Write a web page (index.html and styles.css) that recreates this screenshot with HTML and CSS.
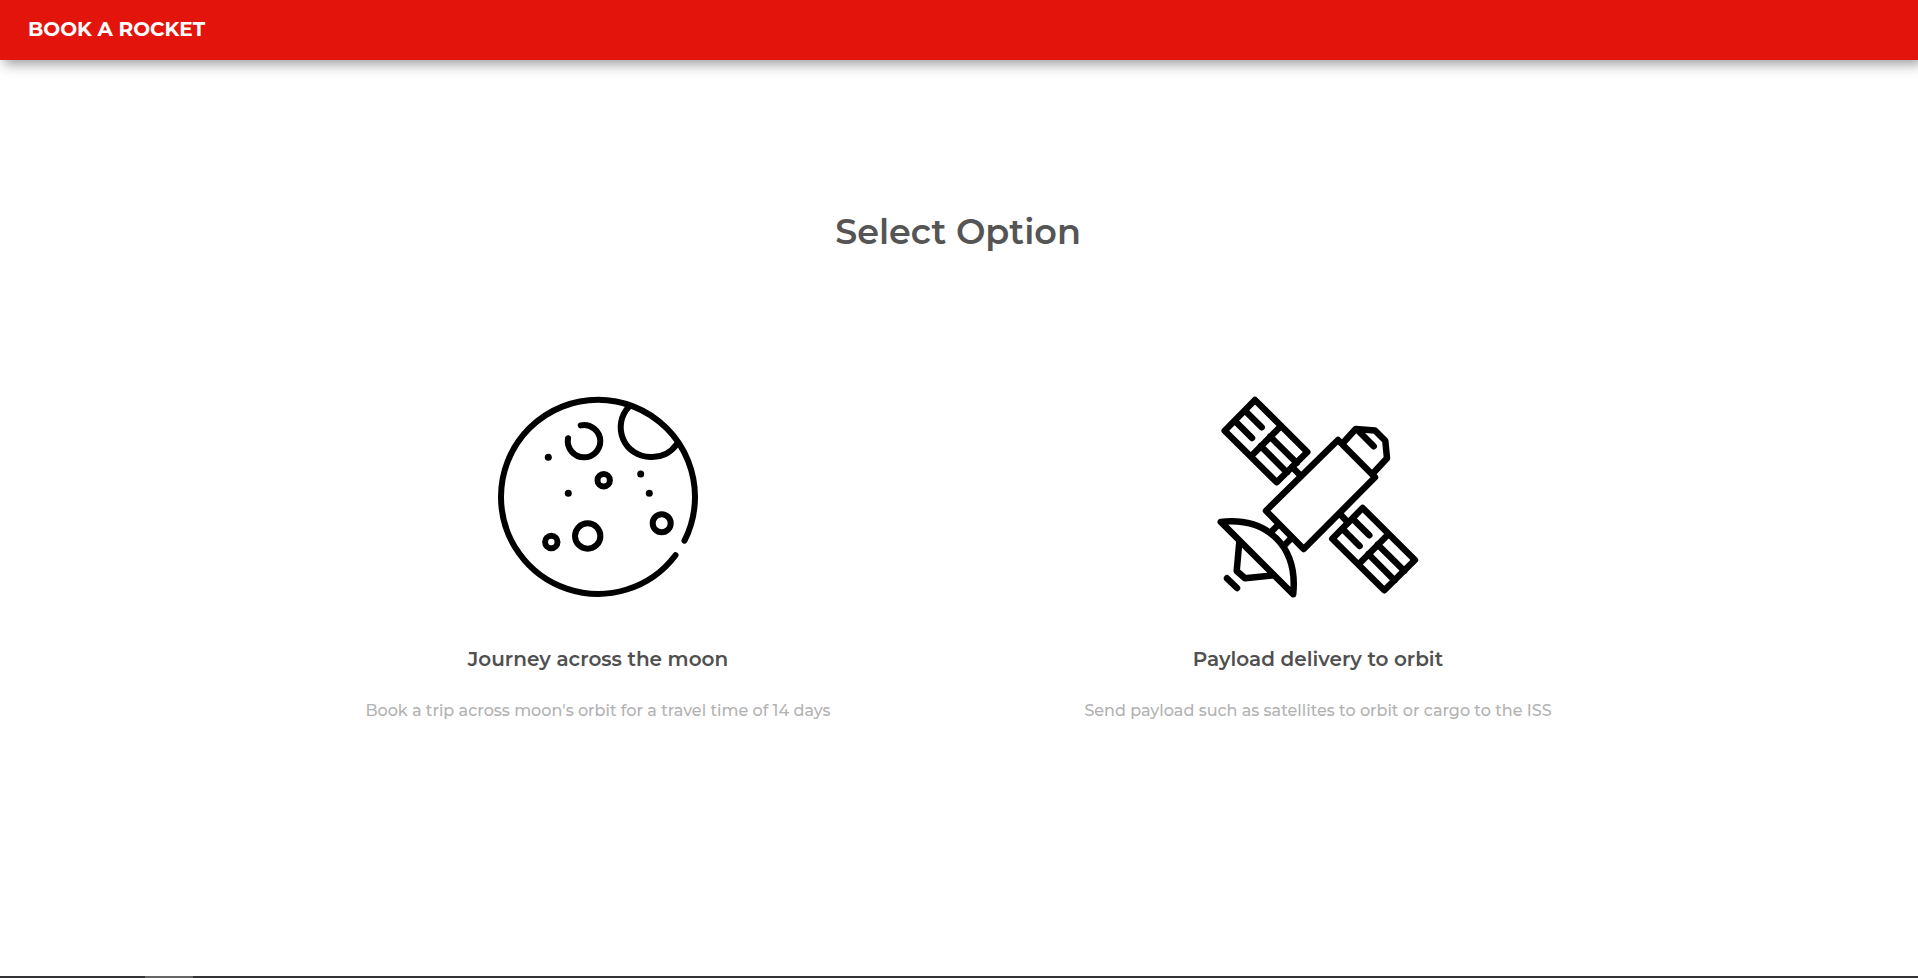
FILE: index.html
```html
<!DOCTYPE html>
<html lang="en">
<head>
<meta charset="utf-8">
<meta name="viewport" content="width=device-width, initial-scale=1">
<title>Book a Rocket</title>
<link rel="stylesheet" href="styles.css">
</head>
<body>
<header class="navbar"><a class="brand" href="#">BOOK A ROCKET</a></header>
<main class="main">
  <h1 class="title">Select Option</h1>
  <div class="options">
    <a class="option" href="#moon">
      <svg class="option-icon" viewBox="0 0 200 200" aria-hidden="true">
        <path d="M177.5 158.2A97 97 0 0 1 3 99.8A97 97 0 0 1 197 99.8A97 97 0 0 1 186.5 143.7"/>
        <path d="M131 9.7A29.7 29.7 0 0 0 153 60A29.7 29.7 0 0 0 178.7 47.3"/>
        <path d="M82.7 28.4A16.3 16.3 0 0 1 102.3 44A16.3 16.3 0 0 1 86 60.3A16.3 16.3 0 0 1 70 41.3"/>
        <circle cx="105.7" cy="83.3" r="6.2"/>
        <circle cx="53.3" cy="145" r="6.2"/>
        <circle cx="89.7" cy="139" r="12.7"/>
        <circle cx="163.7" cy="126.3" r="9"/>
        <g class="dots">
          <circle cx="50.3" cy="60.3" r="3.5"/>
          <circle cx="70.3" cy="96.3" r="3.5"/>
          <circle cx="142.7" cy="77" r="3.5"/>
          <circle cx="151.3" cy="96.3" r="3.5"/>
        </g>
      </svg>
      <h2 class="option-name">Journey across the moon</h2>
      <p class="option-text">Book a trip across moon's orbit for a travel time of 14 days</p>
    </a>
    <a class="option" href="#payload">
      <svg class="option-icon satellite" viewBox="0 0 200 200" aria-hidden="true">
        <defs>
          <path id="panel" d="M37 3L6.7 33.7 58.7 85.3 89.3 55ZM33.3 59L62 30M27.3 14L43.7 30.3M17.5 24.5L34 41M52 39.5L78.8 66M42.7 49L69 75.5"/>
        </defs>
        <use href="#panel"/>
        <use href="#panel" transform="translate(107.6 108)"/>
        <path d="M74 70L82 78M122.5 117.5L130 125.5"/>
        <path d="M120 43L157 80.3 85.7 152 48 113.7Z"/>
        <path d="M124.7 46.3L137.7 32 157 33.5 167.3 43.7 169 61.3 155.3 76M140.3 33.7L155.7 49.3"/>
        <path d="M2.8 124.9C50 120 80 150 75.2 197.2Z"/>
        <path d="M60.3 127.7L53 135M73 141.5L65.7 149"/>
        <path d="M21.3 145L18.7 174 27 181.3 55.3 178.3M9 181.3L19 191"/>
      </svg>
      <h2 class="option-name">Payload delivery to orbit</h2>
      <p class="option-text">Send payload such as satellites to orbit or cargo to the ISS</p>
    </a>
  </div>
</main>
<footer class="edge"><span class="edge-mark"></span></footer>
</body>
</html>
```
FILE: styles.css
```css
* { box-sizing: border-box; }
body {
  display: flex;
  flex-direction: column;
  min-height: 100vh;
  margin: 0;
  background: #fff;
  color: #555;
  font-family: Montserrat, Inter, "Open Sans", sans-serif;
}
.navbar {
  display: flex;
  align-items: center;
  height: 60px;
  padding: 0 28px 2px;
  background: #e3140c;
  box-shadow: 4px 4px 12px rgba(0, 0, 0, 0.4);
}
.brand {
  color: #fff;
  font-size: 20px;
  font-weight: 700;
  text-decoration: none;
}
.main {
  flex: 1;
  padding: 148px 240px 0 238px;
}
.title {
  margin: 0;
  font-size: 35px;
  font-weight: 600;
  line-height: 48px;
  text-align: center;
}
.options {
  display: grid;
  grid-template-columns: 1fr 1fr;
  margin-top: 141px;
}
.option {
  display: flex;
  flex-direction: column;
  align-items: center;
  color: #555;
  text-align: center;
  text-decoration: none;
}
.option-icon {
  width: 200px;
  height: 200px;
  overflow: visible;
  fill: none;
  stroke: #000;
  stroke-width: 6;
  stroke-linecap: round;
  stroke-linejoin: round;
}
.satellite { stroke-width: 6.5; }
.dots { fill: #000; stroke: none; }
.option-name {
  margin: 50px 0 0;
  color: #505050;
  font-size: 20px;
  font-weight: 600;
  line-height: 24px;
}
.option-text {
  margin: 28px 0 0;
  color: #b2b2b2;
  font-size: 16px;
  font-weight: 500;
  line-height: 24px;
}
.edge {
  height: 2px;
  padding-left: 145px;
  background: #333335;
}
.edge-mark {
  display: block;
  width: 48px;
  height: 2px;
  background: #656565;
}
```
